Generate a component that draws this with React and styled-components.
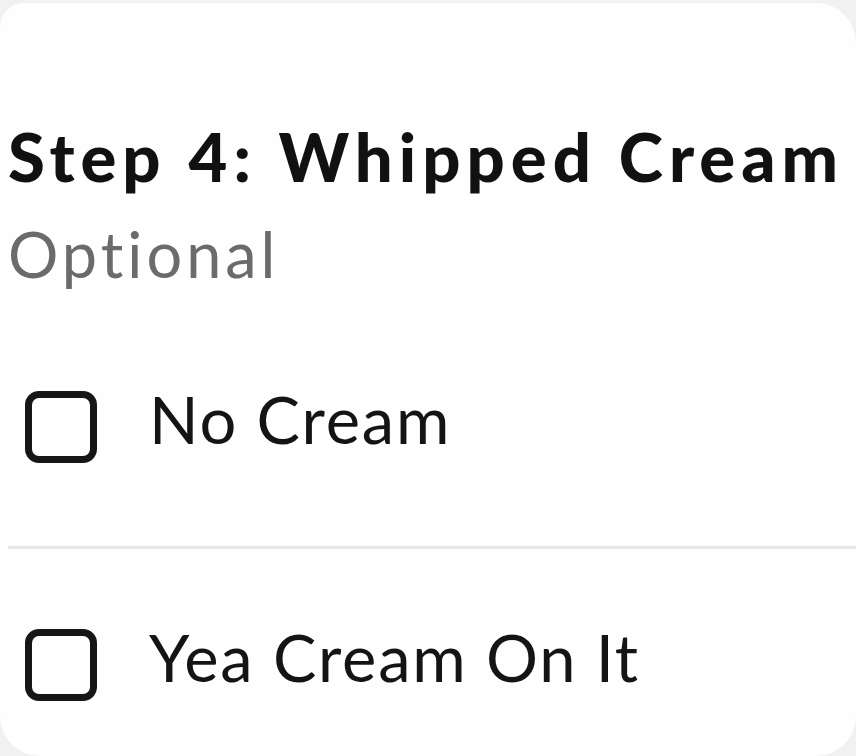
import React from "react";
import styled, { createGlobalStyle } from "styled-components";

const GlobalStyle = createGlobalStyle`
  html, body {
    margin: 0;
    padding: 0;
    background: #f1f1f1;
  }
  body {
    font-family: Lato, "Open Sans", sans-serif;
    font-variant-ligatures: none;
  }
`;

const Card = styled.div`
  margin-top: 3px;
  height: 753px;
  box-sizing: border-box;
  background: #fefefe;
  border-radius: 24px 40px 40px 40px;
  padding: 113px 0 0 8px;
  overflow: hidden;
`;

const Title = styled.h1`
  margin: 0;
  font-family: Lato, sans-serif;
  font-size: 67px;
  font-weight: 900;
  letter-spacing: 6px;
  line-height: normal;
  color: #111;
  white-space: nowrap;
`;

const Subtitle = styled.div`
  margin-top: 20px;
  font-size: 63px;
  font-weight: 400;
  letter-spacing: 4px;
  line-height: normal;
  color: #6b6b6b;
`;

const OptionList = styled.div`
  margin-top: 100px;
  display: flex;
  flex-direction: column;
`;

const Option = styled.label`
  display: flex;
  align-items: flex-start;
  gap: 52px;
  padding: ${({ $first }) => ($first ? "0 0 83px" : "80px 0 0")};
  border-bottom: ${({ $first }) => ($first ? "3px solid #e8e8e8" : "none")};
  cursor: pointer;
`;

const Box = styled.span`
  flex: none;
  margin-left: 17px;
  width: 72px;
  height: 72px;
  box-sizing: border-box;
  border: 7px solid #161616;
  border-radius: 14px;
  background: #fefefe;
`;

const Label = styled.span`
  font-size: 65px;
  font-weight: 400;
  letter-spacing: 1.8px;
  line-height: 56px;
  color: #141414;
  white-space: nowrap;
`;

const options = ["No Cream", "Yea Cream On It"];

export default function App() {
  return (
    <>
      <GlobalStyle />
      <Card>
        <Title>Step 4: Whipped Cream</Title>
        <Subtitle>Optional</Subtitle>
        <OptionList>
          {options.map((label, i) => (
            <Option key={label} $first={i === 0}>
              <Box />
              <Label>{label}</Label>
            </Option>
          ))}
        </OptionList>
      </Card>
    </>
  );
}
